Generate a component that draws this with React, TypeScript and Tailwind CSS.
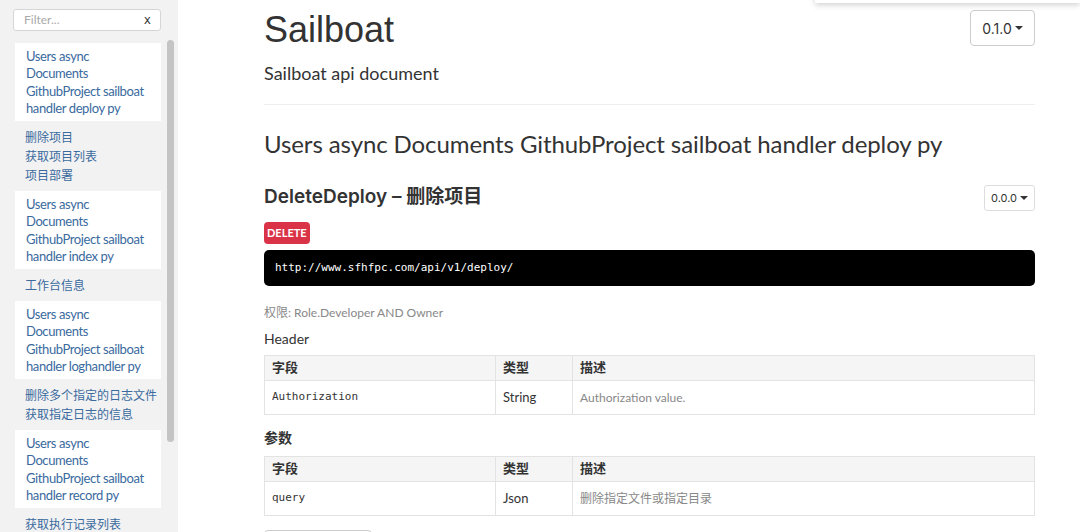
import React from "react";

const body = { fontFamily: "Lato, 'Noto Sans CJK SC', sans-serif" };
const head = { fontFamily: "Inter, 'Noto Sans CJK SC', sans-serif" };
const arial = { fontFamily: "'Liberation Sans', Arial, sans-serif" };
const mono = { fontFamily: "'DejaVu Sans Mono', 'Liberation Mono', monospace" };

const groups = [
  { file: ["Users async", "Documents", "GithubProject sailboat", "handler deploy py"], items: ["删除项目", "获取项目列表", "项目部署"] },
  { file: ["Users async", "Documents", "GithubProject sailboat", "handler index py"], items: ["工作台信息"] },
  { file: ["Users async", "Documents", "GithubProject sailboat", "handler loghandler py"], items: ["删除多个指定的日志文件", "获取指定日志的信息"] },
  { file: ["Users async", "Documents", "GithubProject sailboat", "handler record py"], items: ["获取执行记录列表"] },
];

function Caret() {
  return <span className="ml-[3px] inline-block border-x-[4px] border-t-[4px] border-x-transparent border-t-[#333] align-middle" />;
}

function ParamTable({ rows }: { rows: { field: string; type: string; desc: string }[] }) {
  return (
    <table className="w-full border-collapse text-[13px]" style={body}>
      <thead>
        <tr className="bg-[#f5f5f5] h-[25px]">
          <th className="w-[231px] border border-[#e3e3e3] px-[7px] text-left font-bold text-[#333]">字段</th>
          <th className="w-[77px] border border-[#e3e3e3] px-[7px] text-left font-bold text-[#333]">类型</th>
          <th className="border border-[#e3e3e3] px-[7px] text-left font-bold text-[#333]">描述</th>
        </tr>
      </thead>
      <tbody>
        {rows.map((r) => (
          <tr key={r.field} className="h-[34px]">
            <td className="border border-[#e3e3e3] px-[7px] text-[11px] text-[#333]" style={mono}>{r.field}</td>
            <td className="border border-[#e3e3e3] px-[7px] text-[#333]">{r.type}</td>
            <td className="border border-[#e3e3e3] px-[7px] text-[12px] text-[#888]">{r.desc}</td>
          </tr>
        ))}
      </tbody>
    </table>
  );
}

export default function App() {
  return (
    <div className="relative flex h-[532px] w-[1080px] overflow-hidden bg-white" style={body}>
      {/* sidebar */}
      <aside className="flex w-[178px] shrink-0 bg-[#f2f2f2]">
        <div className="w-[163px] shrink-0 pl-[13px] pr-[2px] pt-[9px]">
          <div className="flex h-[22px] items-center justify-between rounded-[3px] border border-[#d6d6d6] bg-white pl-[10px] pr-[9px] text-[12px]">
            <span className="text-[#aaa]">Filter...</span>
            <span className="text-[12px] text-[#333]" style={mono}>x</span>
          </div>
          <div className="mt-[12px] pl-[2px]">
            {groups.map((g, i) => (
              <div key={i}>
                <div className="h-[77.5px] bg-white pl-[11px] pt-[4.5px] text-[13px] leading-[17.5px] tracking-[-0.4px] text-[#3a6a9e]">
                  {g.file.map((l) => (
                    <div key={l}>{l}</div>
                  ))}
                </div>
                <div className="pl-[10px] pt-[7px] pb-[6.5px] text-[12px] leading-[19px] text-[#3a6a9e]">
                  {g.items.map((it) => (
                    <div key={it}>{it}</div>
                  ))}
                </div>
              </div>
            ))}
          </div>
        </div>
        <div className="ml-[4px] mt-[40px] h-[402px] w-[7px] rounded-full bg-[#c4c4c4]" />
      </aside>

      {/* main */}
      <main className="flex-1 pl-[86px] pr-[45px] pt-[8px] text-[#333]">
        <div className="flex items-start justify-between">
          <h1 className="text-[36px] leading-[44px]" style={arial}>Sailboat</h1>
          <button className="mt-[2px] flex h-[36px] w-[65px] items-center justify-center rounded-[4px] border border-[#ccc] text-[14px] text-[#333]" style={head}>
            0.1.0
            <Caret />
          </button>
        </div>
        <p className="mt-[9px] text-[18px] leading-[24px]">Sailboat api document</p>
        <div className="mt-[19px] border-t border-[#eee]" />

        <h2 className="mt-[23px] text-[24px] leading-[32px] tracking-[-0.1px]">Users async Documents GithubProject sailboat handler deploy py</h2>

        <div className="mt-[24px] flex items-start justify-between">
          <h3 className="text-[19px] leading-[26px] font-semibold" style={head}>DeleteDeploy – 删除项目</h3>
          <button className="mt-[1px] flex h-[26px] w-[51px] items-center justify-center rounded-[3px] border border-[#ddd] text-[11px] text-[#333]" style={head}>
            0.0.0
            <Caret />
          </button>
        </div>

        <div className="mt-[11px] inline-flex h-[22px] items-center rounded-[4px] bg-[#da3347] px-[3px] text-[11px] font-bold text-white">DELETE</div>

        <div className="mt-[6px] flex h-[36px] items-center rounded-[5px] bg-black px-[11px] text-[11px] text-white" style={mono}>
          http://www.sfhfpc.com/api/v1/deploy/
        </div>

        <p className="mt-[18px] text-[12px] text-[#888]">权限: Role.Developer AND Owner</p>

        <h4 className="mt-[7px] text-[14px] leading-[20px]">Header</h4>
        <div className="mt-[6px]">
          <ParamTable rows={[{ field: "Authorization", type: "String", desc: "Authorization value." }]} />
        </div>

        <h4 className="mt-[13px] text-[14px] font-bold leading-[20px]">参数</h4>
        <div className="mt-[8px]">
          <ParamTable rows={[{ field: "query", type: "Json", desc: "删除指定文件或指定目录" }]} />
        </div>

        <div className="mt-[14px] h-[20px] w-[108px] rounded-[4px] border border-[#ccc]" />
      </main>

      {/* dropdown panel edge at top right */}
      <div className="absolute right-0 top-[-20px] h-[23px] w-[265px] bg-white shadow-[0_2px_6px_rgba(0,0,0,0.18)]" />
    </div>
  );
}
